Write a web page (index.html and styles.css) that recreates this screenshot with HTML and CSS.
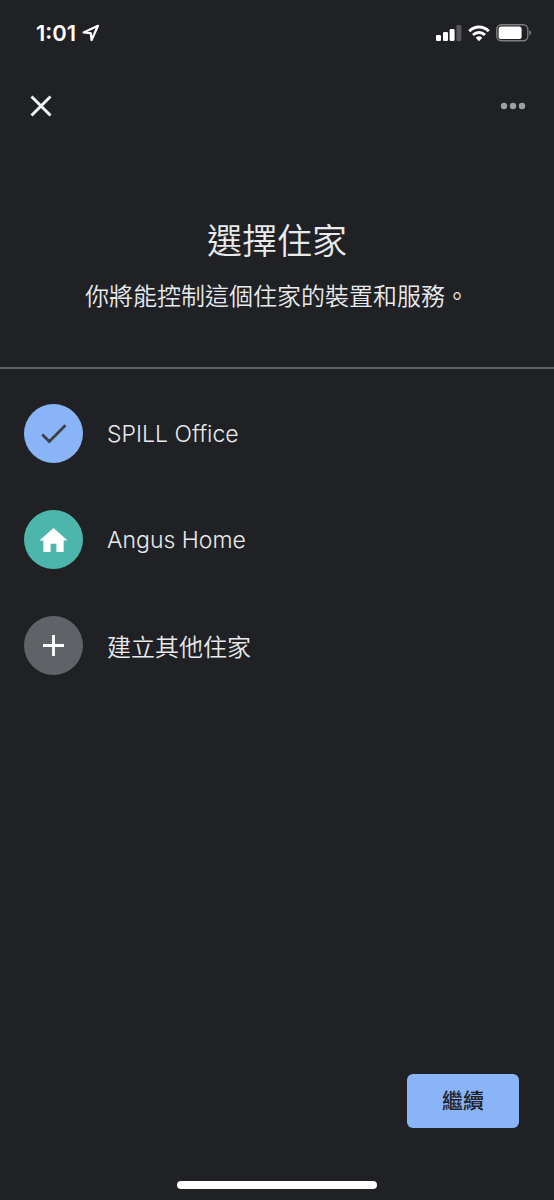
FILE: index.html
```html
<!DOCTYPE html>
<html lang="zh-Hant">
<head>
<meta charset="utf-8">
<meta name="viewport" content="width=device-width, initial-scale=1">
<title>選擇住家</title>
<link rel="stylesheet" href="styles.css">
</head>
<body>
<div class="screen">
  <div class="status">
    <div class="status-time">
      <span>1:01</span>
      <svg width="18" height="18" viewBox="0 0 18 18" aria-hidden="true"><path d="M1.600 8.500 16 1.800 9.600 16 8.700 9.200Z" fill="none" stroke="#fff" stroke-width="2.200" stroke-linejoin="round"/></svg>
    </div>
    <div class="status-icons">
      <svg width="26" height="17" viewBox="0 0 26 17" aria-hidden="true"><g fill="#fff"><rect x="0" y="10" width="5" height="6" rx="1.300"/><rect x="7" y="7" width="5" height="9" rx="1.300"/><rect x="13.600" y="4" width="5" height="12" rx="1.300"/></g><rect x="20.400" y="0" width="5" height="16" rx="1.300" fill="#56575a"/></svg>
      <svg width="22" height="17" viewBox="0 0 22 17" aria-hidden="true"><g fill="none" stroke="#fff" stroke-width="3"><path d="M1.300 6.200C6.700.7 15.300.7 20.700 6.200"/><path d="M5 10C8.400 6.700 13.600 6.700 17 10"/></g><path d="M7.700 12.700Q11 10 14.300 12.700L11 16.200Z" fill="#fff"/></svg>
      <svg width="36" height="18" viewBox="0 0 36 18" aria-hidden="true"><rect x=".8" y=".8" width="31" height="16" rx="4.500" fill="none" stroke="#7d7e80" stroke-width="1.400"/><rect x="2.600" y="2.600" width="23" height="12.400" rx="2.600" fill="#fff"/><path d="M33.300 6.300Q35.300 7 35.300 8.800T33.300 11.300Z" fill="#7d7e80"/></svg>
    </div>
  </div>
  <header class="toolbar">
    <button class="icon-button" type="button" aria-label="關閉"><svg width="22" height="22" viewBox="0 0 22 22"><path d="M1.500 1.500 20.500 20.500M20.500 1.500 1.500 20.500" stroke="#f1f3f4" stroke-width="3"/></svg></button>
    <button class="icon-button" type="button" aria-label="更多"><svg width="26" height="8" viewBox="0 0 26 8"><g fill="#9aa0a6"><circle cx="4" cy="4" r="3.200"/><circle cx="13" cy="4" r="3.200"/><circle cx="22" cy="4" r="3.200"/></g></svg></button>
  </header>
  <div class="intro">
    <h1 class="title">選擇住家</h1>
    <p class="subtitle">你將能控制這個住家的裝置和服務。</p>
  </div>
  <form class="form">
    <div class="options">
      <label class="option">
        <input class="option-input" type="radio" name="home" checked>
        <span class="badge badge-selected"><svg width="28" height="22" viewBox="0 0 28 22" aria-hidden="true"><path d="M2.300 11.500 9.300 18.500 25.500 2.300" fill="none" stroke="#3c4043" stroke-width="2.800"/></svg></span>
        <span class="option-name">SPILL Office</span>
      </label>
      <label class="option">
        <input class="option-input" type="radio" name="home">
        <span class="badge badge-home"><svg width="29" height="26" viewBox="0 0 30 26" aria-hidden="true"><path d="M15 .5 29.500 13.500H25.500V25.500H18V17H12V25.500H4.500V13.500H.5Z" fill="#fff"/></svg></span>
        <span class="option-name">Angus Home</span>
      </label>
      <button class="option" type="button">
        <span class="badge badge-add"><svg width="21" height="21" viewBox="0 0 22 22" aria-hidden="true"><path d="M11 0V22M0 11H22" stroke="#fff" stroke-width="3"/></svg></span>
        <span>建立其他住家</span>
      </button>
    </div>
    <div class="actions">
      <button class="continue" type="submit">繼續</button>
    </div>
  </form>
  <div class="home-bar"></div>
</div>
</body>
</html>
```
FILE: styles.css
```css
* {
  box-sizing: border-box;
}

body {
  margin: 0;
  background: #202124;
  color: #e8eaed;
  font-family: Inter, "Noto Sans CJK TC", sans-serif;
}

button {
  margin: 0;
  padding: 0;
  border: 0;
  background: none;
  color: inherit;
  font: inherit;
  cursor: pointer;
}

svg {
  display: block;
}

.screen {
  display: flex;
  flex-direction: column;
  min-height: 100vh;
}

.status {
  display: flex;
  align-items: center;
  justify-content: space-between;
  padding: 21px 22px 0 36px;
}

.status-time {
  display: flex;
  align-items: center;
  gap: 6px;
  color: #fff;
  font-size: 22px;
  font-weight: 600;
  line-height: 24px;
}

.status-icons {
  display: flex;
  align-items: center;
  gap: 6px;
}

.toolbar {
  display: flex;
  align-items: center;
  justify-content: space-between;
  padding: 40px 20px 0;
}

.icon-button {
  display: flex;
  align-items: center;
  justify-content: center;
  width: 42px;
  height: 42px;
}

.intro {
  padding: 88px 24px 54px;
  border-bottom: 2px solid #5f6368;
  text-align: center;
}

.title {
  margin: 0;
  font-size: 35px;
  font-weight: 350;
  line-height: 52px;
}

.subtitle {
  margin: 14px 0 0;
  font-size: 24px;
  font-weight: 350;
  line-height: 32px;
}

.form {
  display: flex;
  flex: 1;
  flex-direction: column;
  justify-content: space-between;
}

.options {
  display: flex;
  flex-direction: column;
  gap: 47px;
  padding: 35px 24px;
}

.option {
  display: flex;
  align-items: center;
  gap: 24px;
  position: relative;
  font-size: 24px;
  font-weight: 350;
  text-align: left;
  cursor: pointer;
}

.option-name {
  font-size: 23px;
}

.option-input {
  position: absolute;
  opacity: 0;
}

.badge {
  display: flex;
  align-items: center;
  justify-content: center;
  width: 59px;
  height: 59px;
  border-radius: 50%;
}

.badge-selected {
  background: #8ab4f8;
}

.badge-home {
  background: #4db6ac;
}

.badge-add {
  background: #5f6368;
}

.actions {
  display: flex;
  justify-content: flex-end;
  padding: 0 35px 53px;
}

.continue {
  padding: 11px 35px;
  border-radius: 6px;
  background: #8ab4f8;
  color: #202124;
  font-size: 21px;
  font-weight: 500;
  line-height: 32px;
}

.home-bar {
  align-self: center;
  width: 36%;
  height: 8px;
  margin-bottom: 11px;
  border-radius: 4px;
  background: #fff;
}
```
